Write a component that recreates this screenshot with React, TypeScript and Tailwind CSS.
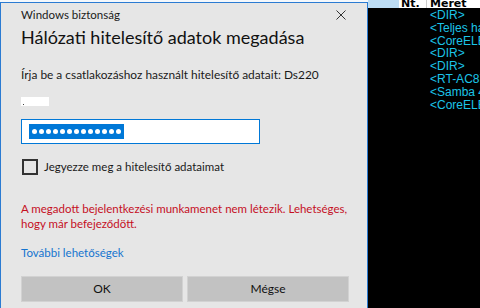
import React from 'react';

const listRows = ['<DIR>', '<Teljes hálózat>', '<CoreELEC>', '<DIR>', '<DIR>', '<RT-AC87U>', '<Samba 4.x>', '<CoreELEC>'];

const App: React.FC = () => {
  return (
    <div className="w-[480px] h-[308px] overflow-hidden flex bg-black" style={{ fontFamily: 'Lato, "Noto Sans", sans-serif' }}>
      {/* left edge of the window behind */}
      <div className="w-[2px] h-full bg-[#0a1a3a] flex flex-col gap-[11px] pt-[20px]">
        <div className="h-[2px] bg-[#2a7bd4]" />
        <div className="h-[2px] bg-[#2a7bd4]" />
        <div className="h-[2px] bg-[#2a7bd4]" />
        <div className="h-[2px] bg-[#2a7bd4]" />
        <div className="h-[2px] bg-[#2a7bd4]" />
        <div className="h-[2px] bg-[#2a7bd4]" />
      </div>

      {/* dialog */}
      <div className="w-[368px] h-full flex flex-col">
        <div className="h-[2px] bg-[#f4f8fc]" />
        <div className="flex-1 bg-[#e6e6e6] border border-b-0 border-[#2b7bd2] flex flex-col pl-[19px] pr-[18px] whitespace-nowrap">
          <div className="flex items-center justify-between h-[24px]">
            <span className="text-[11.5px] text-[#1a1a1a] pl-[1px]">Windows biztonság</span>
            <svg width="10" height="10" viewBox="0 0 10 10" className="mr-[3px]">
              <path d="M0.5 0.5 L9.5 9.5 M9.5 0.5 L0.5 9.5" stroke="#333" strokeWidth="1" />
            </svg>
          </div>
          <div className="text-[18px] leading-[24px] text-[#111] pl-[1px] -mt-[2px]">Hálózati hitelesítő adatok megadása</div>
          <div className="text-[11.9px] leading-[18px] text-[#1a1a1a] mt-[17px] pl-[1px]">Írja be a csatlakozáshoz használt hitelesítő adatait: Ds220</div>
          <div className="mt-[12px] h-[10px] flex items-end pl-[1px]">
            <div className="w-[28px] h-[9px] bg-white relative">
              <span className="absolute left-[2px] bottom-[1px] w-[1px] h-[1px] bg-[#444]" />
            </div>
          </div>
          <div className="mt-[13px] w-[239px] h-[25px] bg-white border border-[#0078d7] flex items-center pl-[7px] ml-[1px]">
            <div className="h-[15px] bg-[#0078d7] flex items-center gap-[2px] px-[3px]">
              {Array.from({ length: 13 }).map((_, i) => (
                <span key={i} className="w-[5px] h-[5px] rounded-full bg-white" />
              ))}
            </div>
          </div>
          <div className="mt-[15px] flex items-center gap-[6px] h-[16px]">
            <div className="w-[16px] h-[16px] border-2 border-[#333] bg-[#e6e6e6] ml-[2px]" />
            <span className="text-[11.5px] text-[#1a1a1a]">Jegyezze meg a hitelesítő adataimat</span>
          </div>
          <div className="mt-[26px] text-[11.5px] leading-[15px] text-[#c50f1f] pl-[1px]">
            A megadott bejelentkezési munkamenet nem létezik. Lehetséges,<br />hogy már befejeződött.
          </div>
          <div className="mt-[13px] text-[11.5px] leading-[17px] text-[#1574cf] pl-[1px]">További lehetőségek</div>
          <div className="mt-[15px] flex gap-[4px] pl-[1px]">
            <button className="w-[162px] h-[26px] bg-[#c2c2c2] border border-[#d2d2d2] text-[12px] text-[#111]">OK</button>
            <button className="w-[162px] h-[26px] bg-[#c2c2c2] border border-[#d2d2d2] text-[12px] text-[#111]">Mégse</button>
          </div>
        </div>
      </div>

      {/* file list behind */}
      <div className="flex-1 h-full flex flex-col">
        <div className="h-[8px] flex overflow-hidden">
          <div className="w-[31px] bg-[#bcdcf4]" />
          <div className="flex-1 bg-white flex items-end overflow-hidden text-[11px] font-bold leading-[11px] text-black" style={{ fontFamily: '"DejaVu Sans", sans-serif' }}>
            <span className="w-[28px] pl-[2px] border-r border-[#ccc] -mb-[1px]">Nt.</span>
            <span className="pl-[3px] -mb-[1px]">Méret</span>
          </div>
        </div>
        <div className="flex-1 flex flex-col pl-[62px] pt-[1px]" style={{ fontFamily: '"Liberation Sans", sans-serif' }}>
          {listRows.map((r, i) => (
            <div key={i} className="text-[12px] leading-[12.8px] whitespace-nowrap text-[#1cc4e8]">{r}</div>
          ))}
        </div>
      </div>
    </div>
  );
};

export default App;
